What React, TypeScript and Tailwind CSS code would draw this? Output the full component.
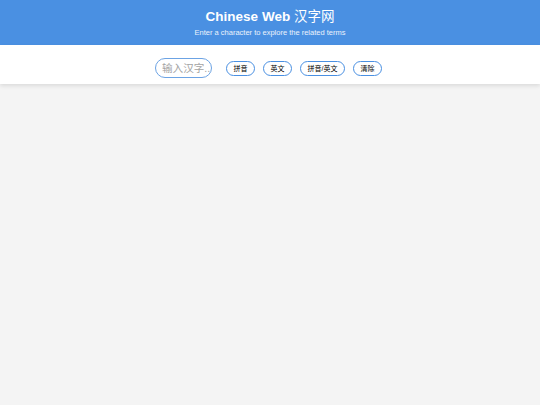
import React from "react";

export default function App() {
  const font = { fontFamily: '"Liberation Sans", Arial, "Noto Sans CJK SC", sans-serif' };
  return (
    <div className="min-h-[405px] w-full bg-[#f4f4f4]" style={font}>
      <header className="h-[45px] bg-[#4a90e2] text-white flex flex-col items-center pt-[9px]">
        <h1 className="text-[13.5px] leading-[16px] font-bold">
          Chinese Web <span className="font-normal">汉字网</span>
        </h1>
        <p className="text-[7.5px] leading-[10px] mt-[3px] text-[#eaf2fc]">Enter a character to explore the related terms</p>
      </header>
      <div className="h-[39px] bg-white shadow-[0_2px_4px_rgba(0,0,0,0.1)] flex items-center justify-center pt-[6px] pr-[3px]">
        <input
          type="text"
          placeholder="输入汉字..."
          className="w-[57px] h-[20px] rounded-[10px] border border-[#6ca3e4] pl-[6px] pr-0 text-[10.6px] text-[#333] placeholder:text-[#a3a3a3] outline-none mr-[14px]"
          style={font}
        />
        <div className="flex items-center gap-[8px] mt-[1px]">
          <button className="h-[15px] w-[29px] rounded-[8px] border border-[#4a90e2] bg-white text-[7px] leading-none text-black flex items-center justify-center">拼音</button>
          <button className="h-[15px] w-[29px] rounded-[8px] border border-[#4a90e2] bg-white text-[7px] leading-none text-black flex items-center justify-center">英文</button>
          <button className="h-[15px] w-[45px] rounded-[8px] border border-[#4a90e2] bg-white text-[7px] leading-none text-black flex items-center justify-center">拼音/英文</button>
          <button className="h-[15px] w-[29px] rounded-[8px] border border-[#4a90e2] bg-white text-[7px] leading-none text-black flex items-center justify-center">清除</button>
        </div>
      </div>
    </div>
  );
}
